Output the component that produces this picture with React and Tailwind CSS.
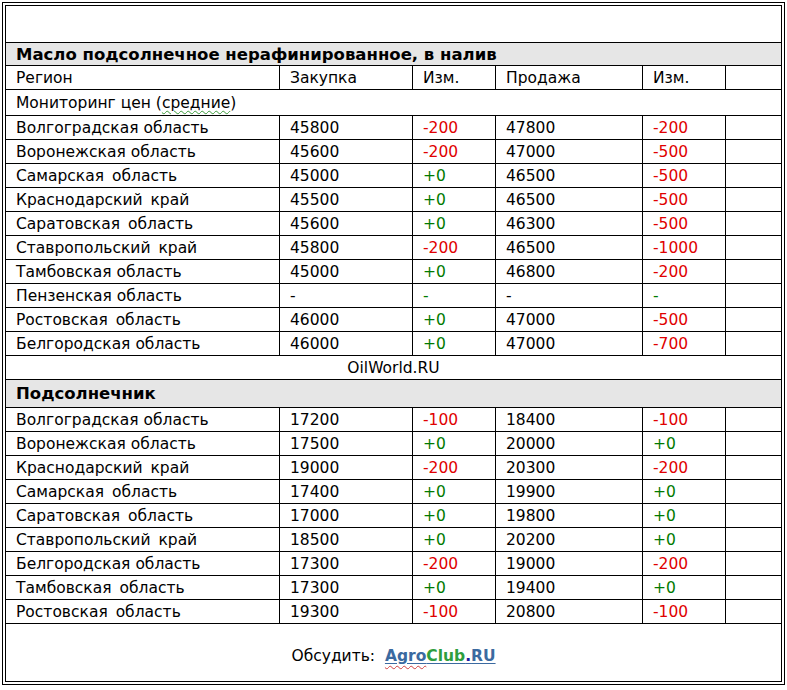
import React from "react";

const OIL = [
  ["Волгоградская область", "45800", "-200", "47800", "-200"],
  ["Воронежская область", "45600", "-200", "47000", "-500"],
  ["Самарская область", "45000", "+0", "46500", "-500", true],
  ["Краснодарский край", "45500", "+0", "46500", "-500", true],
  ["Саратовская область", "45600", "+0", "46300", "-500", true],
  ["Ставропольский край", "45800", "-200", "46500", "-1000", true],
  ["Тамбовская область", "45000", "+0", "46800", "-200"],
  ["Пензенская область", "-", "-", "-", "-"],
  ["Ростовская область", "46000", "+0", "47000", "-500", true],
  ["Белгородская область", "46000", "+0", "47000", "-700"],
];

const SEED = [
  ["Волгоградская область", "17200", "-100", "18400", "-100"],
  ["Воронежская область", "17500", "+0", "20000", "+0"],
  ["Краснодарский край", "19000", "-200", "20300", "-200", true],
  ["Самарская область", "17400", "+0", "19900", "+0", true],
  ["Саратовская область", "17000", "+0", "19800", "+0", true],
  ["Ставропольский край", "18500", "+0", "20200", "+0", true],
  ["Белгородская область", "17300", "-200", "19000", "-200"],
  ["Тамбовская область", "17300", "+0", "19400", "+0", true],
  ["Ростовская область", "19300", "-100", "20800", "-100", true],
];

const W = ["w-[274px]", "w-[133px]", "w-[83px]", "w-[147px]", "w-[83px]", "w-[56px]"];

function Cell({ i, children, className = "" }) {
  return (
    <div className={`${W[i]} shrink-0 border-r border-b border-black pl-[10px] pt-[2px] flex items-center ${className}`}>
      {children}
    </div>
  );
}

function chg(v) {
  return v.startsWith("-") && v !== "-" ? "text-[#e00000]" : "text-[#007a00]";
}

function Row({ r }) {
  const [name, buy, d1, sell, d2, wide] = r;
  return (
    <div className="flex h-[24px]">
      <Cell i={0} className={wide ? "[word-spacing:3px]" : ""}>{name}</Cell>
      <Cell i={1}>{buy}</Cell>
      <Cell i={2} className={chg(d1)}>{d1}</Cell>
      <Cell i={3}>{sell}</Cell>
      <Cell i={4} className={chg(d2)}>{d2}</Cell>
      <Cell i={5} />
    </div>
  );
}

function Full({ h, className = "", children }) {
  return (
    <div className={`${h} border-r border-b border-black flex items-center pt-[2px] ${className}`}>
      {children}
    </div>
  );
}

export default function App() {
  return (
    <div className="bg-white w-[787px] h-[690px] pt-[2px] pl-[2px] font-['DejaVu_Sans',sans-serif] text-[15.5px] text-black leading-none">
      <div className="w-[783px] border border-black p-[2px]">
        <div className="w-[777px] border-l border-t border-black">
          <Full h="h-[37px]" />
          <Full h="h-[23px]" className="bg-[#e6e6e6] pl-[10px] font-bold text-[16.5px]">
            Масло подсолнечное нерафинированное, в налив
          </Full>
          <div className="flex h-[24px]">
            <Cell i={0}>Регион</Cell>
            <Cell i={1}>Закупка</Cell>
            <Cell i={2}>Изм.</Cell>
            <Cell i={3}>Продажа</Cell>
            <Cell i={4}>Изм.</Cell>
            <Cell i={5} />
          </div>
          <Full h="h-[26px]" className="pl-[10px]">
            Мониторинг цен (<span className="underline decoration-wavy decoration-[#3a9a3a] decoration-1 underline-offset-2">средние</span>)
          </Full>
          {OIL.map((r) => <Row key={r[0]} r={r} />)}
          <Full h="h-[24px]" className="justify-center">OilWorld.RU</Full>
          <Full h="h-[28px]" className="bg-[#e6e6e6] pl-[10px] font-bold text-[16.5px]">
            Подсолнечник
          </Full>
          {SEED.map((r) => <Row key={r[0]} r={r} />)}
          <Full h="h-[58px]" className="justify-center pt-[8px]">
            <span>Обсудить:&nbsp;&nbsp;</span>
            <span className="font-bold underline decoration-[#3b6aa0] underline-offset-2">
              <span className="text-[#3b6aa0] underline decoration-wavy decoration-[#d04040] decoration-1 underline-offset-4">Agro</span>
              <span className="text-[#2e9e3e]">Club</span>
              <span className="text-[#1a1aa0]">.</span>
              <span className="text-[#3b6aa0]">RU</span>
            </span>
          </Full>
        </div>
      </div>
    </div>
  );
}
